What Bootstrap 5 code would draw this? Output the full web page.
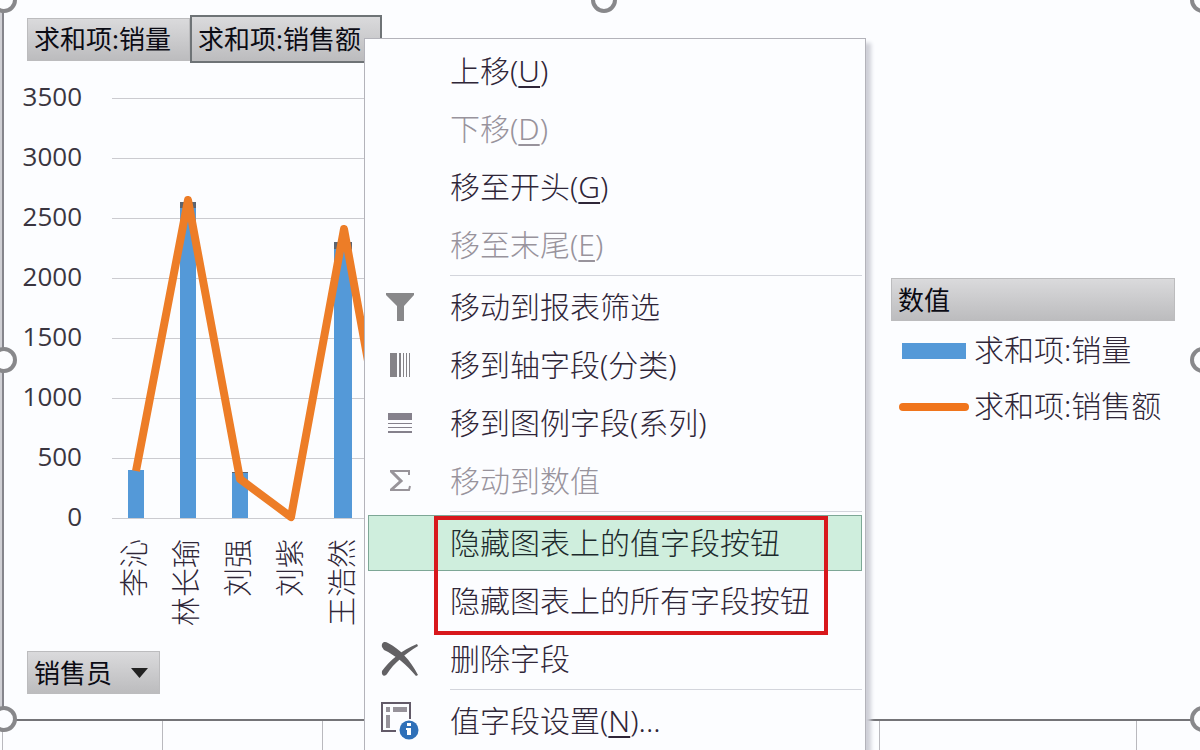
<!DOCTYPE html>
<html lang="zh-CN">
<head>
<meta charset="utf-8">
<meta name="viewport" content="width=device-width, initial-scale=1">
<title>数据透视图</title>
<link href="https://cdn.jsdelivr.net/npm/bootstrap@5.3.0/dist/css/bootstrap.min.css" rel="stylesheet">
<script src="https://cdn.jsdelivr.net/npm/bootstrap@5.3.0/dist/js/bootstrap.bundle.min.js" defer></script>
<style>
  body { background: #fcfdff; color: #2f2638; font-family: "Noto Sans", "Noto Sans CJK SC", sans-serif; font-size: 30px; font-weight: 300; }
  .sheet { min-height: 100vh; overflow: hidden; }
  .chart-frame { margin-right: -3px; border-left: 4px solid #d0d0d5; border-bottom: 2px solid #747478; }
  .chart-frame::before { content: ""; position: absolute; top: 0; bottom: 0; left: -2px; width: 2px; background: #85858c; }
  .grip { position: absolute; z-index: 2; width: 26px; height: 26px; border: 4px solid #88888b; border-radius: 50%; background: #fcfdff; transform: translate(-50%, -50%); }
  .grip-w { left: 0; } .grip-c { left: 50%; } .grip-e { left: 100%; }
  .grip-n { top: 0; } .grip-m { top: 50%; } .grip-s { top: 100%; }
  .chart-main { padding: 15px 0 25px 23px; }
  .field-btn { height: 43px; padding: 0 6px; border: 1px solid #bcbcbe; border-radius: 0; background: linear-gradient(#dadadc, #bcbcbe); color: #0b0b14; font-size: 26px; font-weight: 400; line-height: 40px; text-align: left; }
  .field-first { width: 163px; }
  .field-active { width: 192px; height: 48px; border: 2px solid #6e7376; }
  .field-axis { width: 133px; }
  .plot-row { margin-top: 5px; }
  .ticks { width: 55px; margin: -2px 30px 0 0; font-family: "Open Sans", sans-serif; font-size: 26px; font-weight: 400; color: #3a3540; text-align: right; }
  .ticks span { height: 60px; line-height: 60px; }
  .plot-col { margin-right: 40px; }
  .plot { height: 460px; }
  .cats { margin-left: -3px; padding-top: 11px; font-size: 29px; height: 123px; }
  .cats span { width: 52px; line-height: 50px; writing-mode: vertical-rl; text-orientation: sideways; transform: rotate(180deg); }
  .legend-box { width: 284px; margin: 0 28px 8px 0; }
  .key { width: 70px; margin: 4px 5px 0 0; }
  .entry { height: 56px; padding-left: 8px; white-space: nowrap; }
  .cells { height: 60px; margin-left: 2px; }
  .cells div { border-left: 1px solid #b9b9be; }
  .ctx { position: absolute; z-index: 5; top: 38px; left: 364px; width: 502px; padding: 4px 3px 8px; border: 1px solid #b3b3ba; border-radius: 0; background: #fcfdff; box-shadow: 5px 5px 4px #cfd0d8; font-size: 30px; color: inherit; }
  .ctx .dropdown-item { display: flex; align-items: center; height: 56px; margin-bottom: 2px; width: 494px; padding: 0; border: 1px solid transparent; color: #2f2638; font-weight: 300; line-height: 54px; }
  .ctx .dropdown-item:disabled { color: #98939c; }
  .ctx .dropdown-item.active { background: #cfeedd; border-color: #7da796; color: #1c2a2c; }
  .ctx .ico { width: 62px; margin-right: 19px; display: flex; justify-content: center; flex: none; }
  .ctx .dropdown-divider { margin: 0 0 3px 82px; border-top: 1px solid #d3d5dc; opacity: 1; }
  .ctx u { text-decoration-thickness: 2px; text-underline-offset: 4px; }
  .callout-box { position: absolute; inset: 1px 34px -6px 66px; border: 4px solid #d8181c; pointer-events: none; }
</style>
</head>
<body>
<main class="sheet position-relative d-flex flex-column">
  <section class="chart-frame position-relative d-flex align-items-center">
    <i class="grip grip-w grip-n"></i><i class="grip grip-c grip-n"></i><i class="grip grip-e grip-n"></i>
    <i class="grip grip-w grip-m"></i><i class="grip grip-e grip-m"></i>
    <i class="grip grip-w grip-s"></i><i class="grip grip-e grip-s"></i>

    <div class="chart-main flex-grow-1">
      <div class="d-flex align-items-center">
        <button type="button" class="btn field-btn field-first">求和项:销量</button>
        <button type="button" class="btn field-btn field-active text-nowrap">求和项:销售额</button>
      </div>
      <div class="plot-row d-flex">
        <div class="ticks d-flex flex-column flex-shrink-0 align-items-end">
          <span>3500</span><span>3000</span><span>2500</span><span>2000</span><span>1500</span><span>1000</span><span>500</span><span>0</span>
        </div>
        <div class="plot-col flex-grow-1">
          <svg class="plot d-block w-100" role="img" aria-label="销量与销售额">
            <g fill="#cbcbd0">
              <rect y="30" width="100%" height="1"/><rect y="90" width="100%" height="1"/><rect y="150" width="100%" height="1"/><rect y="210" width="100%" height="1"/><rect y="270" width="100%" height="1"/><rect y="330" width="100%" height="1"/><rect y="390" width="100%" height="1"/><rect y="450" width="100%" height="1"/>
            </g>
            <g fill="#5499d8">
              <rect x="16" y="402" width="16" height="48"/><rect x="68" y="134" width="16" height="316"/><rect x="120" y="404" width="16" height="46"/><rect x="222" y="174" width="18" height="276"/>
            </g>
            <g fill="#5c6470">
              <rect x="68" y="134" width="16" height="6"/><rect x="222" y="174" width="18" height="7"/><rect x="120" y="404" width="16" height="1"/>
            </g>
            <polyline points="24,403 76,132 128,411 179,449 232,161 284,447" fill="none" stroke="#ed7d27" stroke-width="8" stroke-linejoin="round"/>
          </svg>
          <div class="cats d-flex align-items-start">
            <span>李沁</span><span>林长瑜</span><span>刘强</span><span>刘紫</span><span>王浩然</span>
          </div>
        </div>
      </div>
      <button type="button" class="btn field-btn field-axis d-flex align-items-center justify-content-between">销售员
        <svg width="18" height="10" class="me-1"><path d="M0 0H17L8.500 10Z" fill="#222"/></svg>
      </button>
    </div>

    <aside class="legend-box flex-shrink-0">
      <button type="button" class="btn field-btn w-100 d-block">数值</button>
      <div class="entry d-flex align-items-center">
        <svg class="key" height="16"><rect x="3" width="64" height="16" fill="#5499d8"/></svg>求和项:销量
      </div>
      <div class="entry d-flex align-items-center">
        <svg class="key" height="8"><rect width="70" height="8" rx="4" fill="#f0751c"/></svg>求和项:销售额
      </div>
    </aside>
  </section>

  <div class="cells d-flex">
    <div style="width:160px"></div><div style="width:160px"></div><div style="width:557px"></div><div style="width:257px"></div><div class="flex-grow-1"></div>
  </div>

  <div class="dropdown-menu show ctx" role="menu">
    <button type="button" class="dropdown-item"><span class="ico"></span><span>上移(<u>U</u>)</span></button>
    <button type="button" class="dropdown-item" disabled><span class="ico"></span><span>下移(<u>D</u>)</span></button>
    <button type="button" class="dropdown-item"><span class="ico"></span><span>移至开头(<u>G</u>)</span></button>
    <button type="button" class="dropdown-item" disabled><span class="ico"></span><span>移至末尾(<u>E</u>)</span></button>
    <hr class="dropdown-divider">
    <button type="button" class="dropdown-item"><span class="ico"><svg width="28" height="28"><path d="M0 0H28V2L18 13V28H11V13L0 2Z" fill="#88888a"/></svg></span>移动到报表筛选</button>
    <button type="button" class="dropdown-item"><span class="ico"><svg width="20" height="24" fill="#858388"><path d="M0 0H7V24H0ZM9 0H11V24H9ZM13 0H14V24H13ZM16 0H17V24H16ZM19 0H20V24H19Z"/></svg></span>移到轴字段(分类)</button>
    <button type="button" class="dropdown-item"><span class="ico"><svg width="24" height="20" fill="#85818c"><path d="M0 0H24V7H0ZM0 10H24V11H0ZM0 14H24V15H0ZM0 18H24V20H0Z"/></svg></span>移到图例字段(系列)</button>
    <button type="button" class="dropdown-item" disabled><span class="ico"><svg width="22" height="22" fill="none" stroke="#98949a"><path d="M1 1H20V5" stroke-width="2"/><path d="M2 1L12 11L2 20" stroke-width="3"/><path d="M1 20H20L21 16" stroke-width="2"/></svg></span>移动到数值</button>
    <hr class="dropdown-divider">
    <div class="position-relative">
      <button type="button" class="dropdown-item active"><span class="ico"></span>隐藏图表上的值字段按钮</button>
      <button type="button" class="dropdown-item"><span class="ico"></span>隐藏图表上的所有字段按钮</button>
      <div class="callout-box"></div>
    </div>
    <button type="button" class="dropdown-item"><span class="ico"><svg width="38" height="36" fill="#626164"><path d="M1 6C0 1 4 0 7 2C19 8 29 19 37 34L35 35C26 24 14 14 3 9Z"/><path d="M1 30C9 19 21 9 36 3L37 5C24 13 13 22 6 33C4 36 0 35 1 30Z"/></svg></span>删除字段</button>
    <hr class="dropdown-divider">
    <button type="button" class="dropdown-item"><span class="ico"><svg width="38" height="38"><path d="M15 29H1V1H29V17" fill="none" stroke="#625a68" stroke-width="2"/><path d="M5 5H9V10H5ZM12 5H26V10H12ZM5 13H9V26H5Z" fill="#96929a"/><circle cx="28" cy="28" r="9.500" fill="#2f70b8"/><path d="M26 21H30V24H26ZM25 26H30V33H26V28H25Z" fill="#fff"/></svg></span><span>值字段设置(<u>N</u>)...</span></button>
  </div>
</main>
</body>
</html>
